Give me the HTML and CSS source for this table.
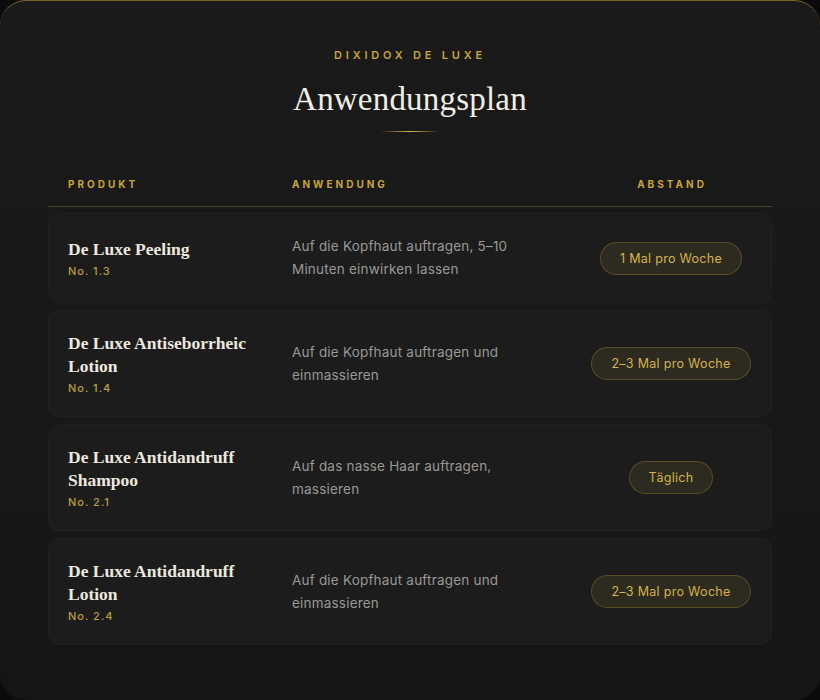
FILE: index.html
```html
<!DOCTYPE html>
<html lang="de">
<head>
<meta charset="utf-8">
<title>Anwendungsplan</title>
<link rel="stylesheet" href="styles.css">
</head>
<body>
<main class="card">
  <header class="head">
    <div class="brand">DIXIDOX DE LUXE</div>
    <h1 class="title">Anwendungsplan</h1>
    <div class="divider"></div>
  </header>
  <section class="table">
    <div class="thead">
      <div>PRODUKT</div>
      <div>ANWENDUNG</div>
      <div class="center">ABSTAND</div>
    </div>
    <div class="rows">
      <div class="row">
        <div class="prod"><div class="name">De Luxe Peeling</div><div class="no">No. 1.3</div></div>
        <div class="desc">Auf die Kopfhaut auftragen, 5–10 Minuten einwirken lassen</div>
        <div class="center"><span class="badge">1 Mal pro Woche</span></div>
      </div>
      <div class="row">
        <div class="prod"><div class="name">De Luxe Antiseborrheic Lotion</div><div class="no">No. 1.4</div></div>
        <div class="desc">Auf die Kopfhaut auftragen und einmassieren</div>
        <div class="center"><span class="badge">2–3 Mal pro Woche</span></div>
      </div>
      <div class="row">
        <div class="prod"><div class="name">De Luxe Antidandruff Shampoo</div><div class="no">No. 2.1</div></div>
        <div class="desc">Auf das nasse Haar auftragen, massieren</div>
        <div class="center"><span class="badge">Täglich</span></div>
      </div>
      <div class="row">
        <div class="prod"><div class="name">De Luxe Antidandruff Lotion</div><div class="no">No. 2.4</div></div>
        <div class="desc">Auf die Kopfhaut auftragen und einmassieren</div>
        <div class="center"><span class="badge">2–3 Mal pro Woche</span></div>
      </div>
    </div>
  </section>
</main>
</body>
</html>
```
FILE: styles.css
```css
html, body {
  margin: 0;
  padding: 0;
  background: #0b0b0b;
}
body {
  font-family: Inter, "Noto Sans", sans-serif;
  width: 820px;
  height: 700px;
  overflow: hidden;
}
.card {
  box-sizing: border-box;
  width: 820px;
  height: 700px;
  border-radius: 26px;
  background: linear-gradient(180deg, #1a1a1a 0%, #181818 60%, #151515 100%);
  border-top: 1px solid rgba(201, 165, 58, 0.55);
  padding: 46px 48px 0;
}
.head {
  text-align: center;
}
.brand {
  color: #c9a53a;
  font-size: 11px;
  font-weight: 600;
  letter-spacing: 3.8px;
  line-height: 16px;
}
.title {
  margin: 16px 0 0;
  font-family: "Liberation Serif", "DejaVu Serif", serif;
  font-weight: 400;
  font-size: 33px;
  line-height: 40px;
  letter-spacing: 0.2px;
  color: #f1ede4;
}
.divider {
  width: 60px;
  height: 1px;
  margin: 12px auto 0;
  background: linear-gradient(90deg, rgba(201,165,58,0) 0%, #d7b551 50%, rgba(201,165,58,0) 100%);
}
.table {
  margin-top: 45px;
}
.thead {
  display: grid;
  grid-template-columns: 224px 1fr 160px;
  padding: 0 20px 15px;
  border-bottom: 1px solid rgba(201, 165, 58, 0.28);
  color: #c9a53a;
  font-size: 10px;
  font-weight: 700;
  letter-spacing: 3px;
  line-height: 14px;
}
.center {
  text-align: center;
}
.rows {
  display: flex;
  flex-direction: column;
  gap: 7px;
  padding-top: 6px;
}
.row {
  display: grid;
  grid-template-columns: 224px 1fr 160px;
  align-items: center;
  padding: 21px 20px 21px 19px;
  border-radius: 12px;
  background: #1c1c1c;
  border: 1px solid rgba(255, 255, 255, 0.025);
}
.name {
  font-family: "Liberation Serif", "DejaVu Serif", serif;
  font-weight: 700;
  font-size: 17.5px;
  line-height: 23px;
  color: #ece8df;
  padding-right: 20px;
}
.no {
  margin-top: 3px;
  font-size: 11px;
  line-height: 14px;
  letter-spacing: 1px;
  color: #bb9c3e;
  font-weight: 500;
}
.desc {
  font-size: 13.5px;
  line-height: 23px;
  letter-spacing: 0.2px;
  color: #9a9895;
  padding-right: 60px;
}
.badge {
  display: inline-block;
  padding: 8px 19px;
  font-size: 12.5px;
  line-height: 15px;
  letter-spacing: 0.3px;
  color: #d6b24a;
  background: rgba(201, 165, 58, 0.1);
  border: 1px solid rgba(201, 165, 58, 0.28);
  border-radius: 20px;
  font-weight: 400;
}
```
